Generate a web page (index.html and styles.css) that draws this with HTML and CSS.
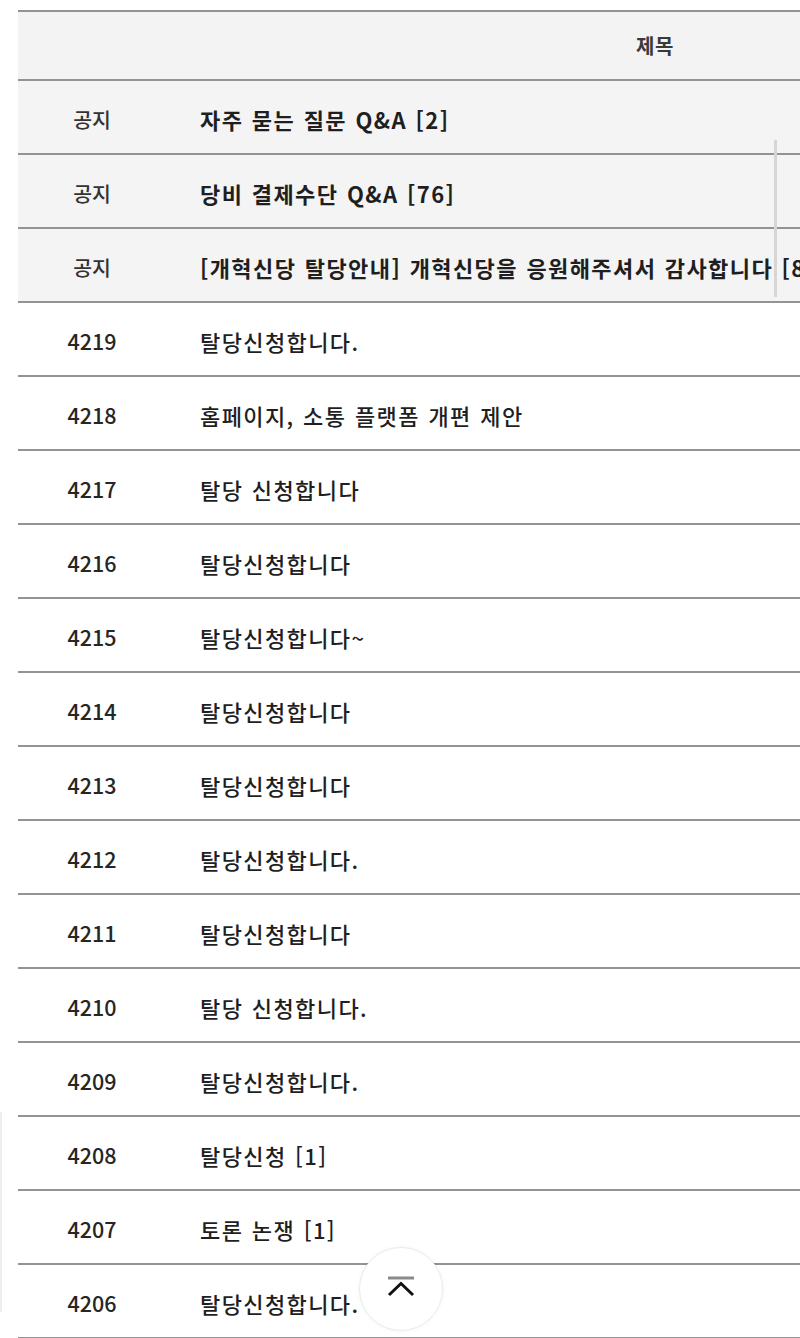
FILE: index.html
```html
<!DOCTYPE html>
<html lang="ko">
<head>
<meta charset="utf-8">
<title>게시판</title>
<link rel="stylesheet" href="styles.css">
</head>
<body>
<div class="page">
  <div class="board">
    <div class="row head">
      <div class="cell num"></div>
      <div class="cell title center">제목</div>
    </div>
    <div class="row notice">
      <div class="cell num">공지</div>
      <div class="cell title">자주 묻는 질문 Q&amp;A [2]</div>
    </div>
    <div class="row notice">
      <div class="cell num">공지</div>
      <div class="cell title">당비 결제수단 Q&amp;A [76]</div>
    </div>
    <div class="row notice">
      <div class="cell num">공지</div>
      <div class="cell title">[개혁신당 탈당안내] 개혁신당을 응원해주셔서 감사합니다 [8]</div>
    </div>
    <div class="row"><div class="cell num">4219</div><div class="cell title">탈당신청합니다.</div></div>
    <div class="row"><div class="cell num">4218</div><div class="cell title">홈페이지, 소통 플랫폼 개편 제안</div></div>
    <div class="row"><div class="cell num">4217</div><div class="cell title">탈당 신청합니다</div></div>
    <div class="row"><div class="cell num">4216</div><div class="cell title">탈당신청합니다</div></div>
    <div class="row"><div class="cell num">4215</div><div class="cell title">탈당신청합니다~</div></div>
    <div class="row"><div class="cell num">4214</div><div class="cell title">탈당신청합니다</div></div>
    <div class="row"><div class="cell num">4213</div><div class="cell title">탈당신청합니다</div></div>
    <div class="row"><div class="cell num">4212</div><div class="cell title">탈당신청합니다.</div></div>
    <div class="row"><div class="cell num">4211</div><div class="cell title">탈당신청합니다</div></div>
    <div class="row"><div class="cell num">4210</div><div class="cell title">탈당 신청합니다.</div></div>
    <div class="row"><div class="cell num">4209</div><div class="cell title">탈당신청합니다.</div></div>
    <div class="row"><div class="cell num">4208</div><div class="cell title">탈당신청 [1]</div></div>
    <div class="row"><div class="cell num">4207</div><div class="cell title">토론 논쟁 [1]</div></div>
    <div class="row"><div class="cell num">4206</div><div class="cell title">탈당신청합니다.</div></div>
  </div>
  <div class="scroll-mark"></div>
  <div class="edge-mark"></div>
  <button class="to-top" aria-label="맨 위로">
    <svg width="30" height="22" viewBox="0 0 30 22">
      <line x1="2" y1="2" x2="28" y2="2" stroke="#8a8a8a" stroke-width="3"/>
      <polyline points="3,19 15,7.5 27,19" fill="none" stroke="#111" stroke-width="3"/>
    </svg>
  </button>
</div>
</body>
</html>
```

FILE: styles.css
```css
html, body {
  margin: 0;
  padding: 0;
  background: #ffffff;
}

body {
  width: 800px;
  height: 1338px;
  overflow: hidden;
  font-family: "Noto Sans CJK KR", "Noto Sans", sans-serif;
  color: #1f1f1f;
}

.page {
  position: relative;
  width: 800px;
  height: 1338px;
  overflow: hidden;
  padding-top: 10px;
  box-sizing: border-box;
}

.board {
  margin-left: 18px;
  width: 1126px;
  border-top: 2px solid #939393;
}

.row {
  display: grid;
  grid-template-columns: 148px 978px;
  height: 72px;
  border-bottom: 2px solid #939393;
  background: #ffffff;
}

.row.head {
  height: 67px;
  background: #f3f3f3;
}

.row.notice {
  background: #f4f4f4;
}

.cell {
  display: flex;
  align-items: center;
  font-size: 22px;
  font-weight: 500;
  letter-spacing: 1.4px;
  word-spacing: 1px;
  white-space: nowrap;
  padding-top: 3px;
  box-sizing: border-box;
}

.cell.num {
  justify-content: center;
  font-size: 21.5px;
  letter-spacing: 0;
  word-spacing: 0;
  color: #262626;
}

.cell.title {
  padding-left: 34px;
}

.cell.center {
  justify-content: center;
  padding-left: 0;
  font-size: 20px;
  font-weight: 700;
  letter-spacing: 0.5px;
  color: #3a3a3a;
  padding-top: 0;
}

.row.notice .cell {
  font-weight: 700;
}

.row.notice .cell.num {
  font-weight: 500;
  font-size: 20.5px;
  color: #333;
}

.scroll-mark {
  position: absolute;
  left: 774px;
  top: 140px;
  width: 3px;
  height: 157px;
  background: #d6d6d6;
}

.edge-mark {
  position: absolute;
  left: 0;
  top: 1112px;
  width: 2px;
  height: 200px;
  background: #eeeeee;
}

.to-top {
  position: absolute;
  left: 359px;
  top: 1247px;
  width: 84px;
  height: 84px;
  border-radius: 50%;
  border: 1px solid #ececec;
  background: #ffffff;
  box-shadow: 0 0 4px rgba(0, 0, 0, 0.05);
  display: flex;
  align-items: center;
  justify-content: center;
  padding: 0;
  padding-bottom: 4px;
  cursor: pointer;
}
```
